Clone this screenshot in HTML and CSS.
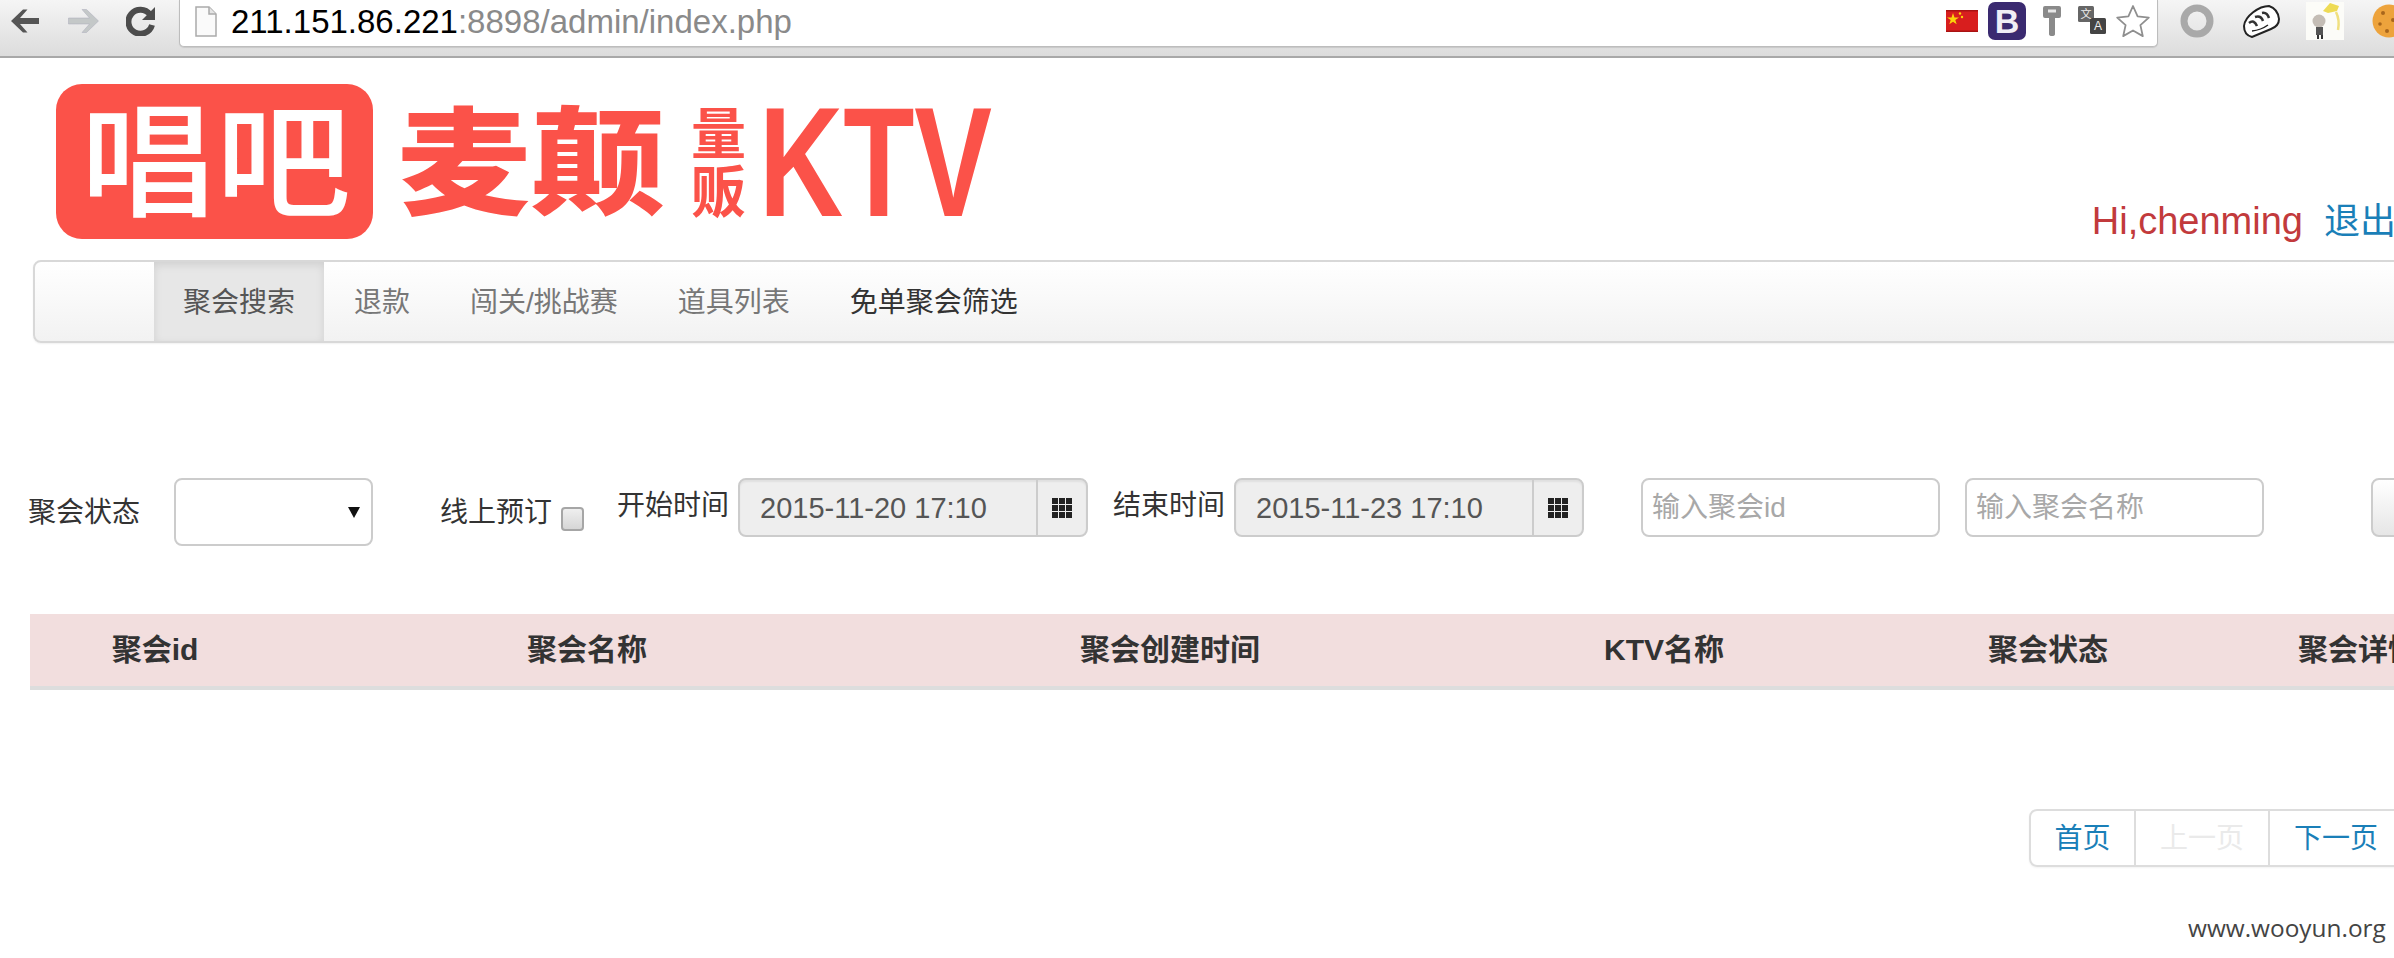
FILE: index.html
```html
<!DOCTYPE html>
<html lang="zh-CN">
<head>
<meta charset="utf-8">
<title>KTV admin</title>
<link rel="stylesheet" href="styles.css">
</head>
<body>
<div class="toolbar">
  <div class="nav-buttons">
    <svg class="ic-back" viewBox="0 0 30 26"><path d="M1 13 13 1.500h4.500L10 10h19v6H10l7.500 8.500H13z" fill="#555"/></svg>
    <svg class="ic-forward" viewBox="0 0 32 26"><path d="M31 13 19 1.500h-4.500L22 10H1v6h21l-7.500 8.500H19z" fill="#c4c8c8" stroke="#aab" stroke-width=".5"/></svg>
    <svg class="ic-reload" viewBox="0 0 30 30"><path d="M24 8.500A12 12 0 1 0 26 19" fill="none" stroke="#4c4c4c" stroke-width="6"/><path d="M29 1v13H16z" fill="#4c4c4c"/></svg>
  </div>
  <div class="omnibox">
    <svg class="ic-page" viewBox="0 0 22 31"><path d="M1 1h13l7 7v22H1z" fill="#fafafa" stroke="#aaa" stroke-width="1.500"/><path d="M14 1v7h7" fill="#e4e4e4" stroke="#aaa" stroke-width="1.500"/></svg>
    <span class="url"><span class="url-host">211.151.86.221</span>:8898/admin/index.php</span>
    <span class="omni-icons">
      <svg class="ic-flag" viewBox="0 0 32 22"><rect width="32" height="22" fill="#d81e1e"/><rect width="32" height="1.500" fill="#a91212"/><rect y="20.500" width="32" height="1.500" fill="#a91212"/><path d="m7 3 1.500 4.500H13L9.300 10l1.400 4.300L7 11.700l-3.700 2.600L4.700 10 1 7.500h4.500z" fill="#fbd40a"/><circle cx="14" cy="3.500" r="1.200" fill="#fbd40a"/><circle cx="16" cy="7" r="1.200" fill="#fbd40a"/></svg>
      <span class="ic-bootstrap">B</span>
      <svg class="ic-key" viewBox="0 0 20 30"><path d="M1 2q0-2 2-2h14q2 0 2 2v8q0 2-2 2h-4v16q0 2-3 2t-3-2V12H3q-2 0-2-2z" fill="#8a8a8a"/><rect x="6" y="3.500" width="8" height="3" fill="#e8e8e8"/></svg>
      <svg class="ic-translate" viewBox="0 0 28 28"><rect width="16" height="16" rx="1.500" fill="#666"/><rect x="12" y="12" width="16" height="16" rx="1.500" fill="#444"/><text class="tr-a" x="8" y="12">文</text><text class="tr-b" x="20" y="24">A</text></svg>
      <svg class="ic-star" viewBox="0 0 34 34"><path d="m17 2 4.600 10.400 11.200 1.200-8.400 7.500 2.400 11L17 26.500 7.200 32.100l2.400-11-8.400-7.500 11.200-1.200z" fill="#fff" stroke="#8f8f8f" stroke-width="1.800" stroke-linejoin="round"/></svg>
    </span>
  </div>
  <div class="extensions">
    <svg class="ic-ring" viewBox="0 0 34 34"><circle cx="17" cy="17" r="13" fill="none" stroke="#a9a9a9" stroke-width="7"/></svg>
    <svg class="ic-shoe" viewBox="0 0 38 34"><path d="M2 22C3 12 17 2 27 2q9 3 10 13 0 7-8 10L10 33Q2 31 2 22z" fill="#fff" stroke="#222" stroke-width="2"/><path d="M7 19q5-4 8 3M13 13q6-2 8 4M20 9q5-1 7 5" fill="none" stroke="#333" stroke-width="2.500"/><path d="M10 27q9-1 16-6" fill="none" stroke="#222" stroke-width="1.500"/></svg>
    <svg class="ic-anime" viewBox="0 0 38 38"><rect width="38" height="38" fill="#fcfcf8"/><path d="M17 9 24 1l9 3-2 5-9 2z" fill="#eedb55"/><path d="M30 10q4 8 2 18" fill="none" stroke="#f0e080" stroke-width="2.500"/><circle cx="13" cy="19" r="6.500" fill="#c4bdb5"/><rect x="10" y="25" width="7" height="8" fill="#555"/><path d="M11 33h2v4h-2zM15 33h2v4h-2z" fill="#333"/></svg>
    <svg class="ic-cookie" viewBox="0 0 34 34"><circle cx="17" cy="17" r="16.500" fill="#eda33c"/><circle cx="11" cy="9" r="2" fill="#a8661c"/><circle cx="21" cy="16" r="2" fill="#a8661c"/><circle cx="8" cy="20" r="1.800" fill="#a8661c"/><circle cx="15" cy="27" r="2" fill="#a8661c"/></svg>
  </div>
</div>

<header class="site-header">
  <svg class="logo" viewBox="0 0 937 155" role="img" aria-label="唱吧麦颠量贩KTV">
    <rect class="logo-badge" width="317" height="155" rx="26"/>
    <text class="logo-cjk logo-white" x="24" y="123" textLength="271" lengthAdjust="spacingAndGlyphs">唱吧</text>
    <text class="logo-cjk logo-big" x="341" y="121" textLength="268" lengthAdjust="spacingAndGlyphs">麦颠</text>
    <text class="logo-cjk logo-small" x="635" y="70" textLength="55" lengthAdjust="spacingAndGlyphs">量</text>
    <text class="logo-cjk logo-small" x="635" y="128" textLength="55" lengthAdjust="spacingAndGlyphs">贩</text>
    <text class="logo-latin" x="703" y="132" textLength="233" lengthAdjust="spacingAndGlyphs">KTV</text>
  </svg>
  <div class="user">
    <span class="user-name">Hi,chenming</span>
    <a class="user-exit">退出</a>
  </div>
</header>

<nav class="main-nav">
  <a class="tab tab-active">聚会搜索</a>
  <a class="tab">退款</a>
  <a class="tab">闯关/挑战赛</a>
  <a class="tab">道具列表</a>
  <a class="tab tab-dark">免单聚会筛选</a>
</nav>

<form class="filters">
  <label class="flabel flabel-state">聚会状态</label>
  <div class="select"><span class="select-arrow"></span></div>
  <label class="flabel flabel-online">线上预订</label>
  <span class="checkbox"></span>
  <label class="flabel flabel-time flabel-start">开始时间</label>
  <div class="date-group date-start">
    <span class="date-value">2015-11-20 17:10</span>
    <span class="date-btn"><span class="grid-icon"><i></i><i></i><i></i><i></i><i></i><i></i><i></i><i></i><i></i></span></span>
  </div>
  <label class="flabel flabel-time flabel-end">结束时间</label>
  <div class="date-group date-end">
    <span class="date-value">2015-11-23 17:10</span>
    <span class="date-btn"><span class="grid-icon"><i></i><i></i><i></i><i></i><i></i><i></i><i></i><i></i><i></i></span></span>
  </div>
  <div class="textbox textbox-id">输入聚会id</div>
  <div class="textbox textbox-name">输入聚会名称</div>
  <div class="search-btn"></div>
</form>

<div class="table-head">
  <div>聚会id</div>
  <div>聚会名称</div>
  <div>聚会创建时间</div>
  <div>KTV名称</div>
  <div>聚会状态</div>
  <div>聚会详情</div>
</div>

<div class="pagination">
  <a class="page page-first">首页</a>
  <a class="page page-disabled">上一页</a>
  <a class="page">下一页</a>
</div>

<div class="watermark">www.wooyun.org</div>
</body>
</html>
```
FILE: styles.css
```css
* { box-sizing: border-box; }
html, body { margin: 0; padding: 0; }
body {
  position: relative;
  width: 2394px;
  height: 958px;
  overflow: hidden;
  background: #fff;
  color: #333;
  font-family: "Liberation Sans", "Noto Sans CJK SC", sans-serif;
  font-size: 28px;
}

/* Browser chrome */
.toolbar {
  display: flex;
  height: 58px;
  background: linear-gradient(#f5f5f5, #dcdcdc);
  border-bottom: 2px solid #a8a8a8;
}
.nav-buttons { display: flex; width: 179px; padding-left: 10px; flex: none; }
.nav-buttons svg { display: block; }
.ic-back { width: 30px; height: 26px; margin-top: 8px; }
.ic-forward { width: 33px; height: 26px; margin: 8px 0 0 27px; }
.ic-reload { width: 30px; height: 30px; margin: 6px 0 0 26px; }
.omnibox {
  display: flex;
  align-items: flex-start;
  width: 1979px;
  height: 47px;
  flex: none;
  background: #fff;
  border: 1px solid #bdbdbd;
  border-top: 0;
  border-radius: 0 0 5px 5px;
  box-shadow: 0 1px 1px #c8c8c8;
  padding-left: 15px;
}
.ic-page { width: 22px; height: 31px; margin-top: 6px; flex: none; }
.url {
  margin-left: 14px;
  font-size: 33px;
  line-height: 44px;
  color: #8a8a8a;
  white-space: nowrap;
}
.url-host { color: #000; }
.omni-icons { display: flex; margin-left: auto; align-items: flex-start; padding-right: 7px; }
.ic-flag { width: 32px; height: 22px; margin-top: 10px; }
.ic-bootstrap {
  width: 38px;
  height: 38px;
  margin: 2px 0 0 10px;
  border-radius: 7px;
  background: #3a2a70;
  color: #f0eef6;
  font-weight: 700;
  font-size: 34px;
  line-height: 38px;
  text-align: center;
}
.ic-key { width: 20px; height: 30px; margin: 6px 0 0 16px; }
.ic-translate { width: 28px; height: 28px; margin: 6px 0 0 16px; }
.tr-a { font-size: 11px; fill: #eee; text-anchor: middle; }
.tr-b { font-size: 12px; fill: #eee; text-anchor: middle; }
.ic-star { width: 34px; height: 34px; margin: 4px 0 0 10px; }
.extensions { position: relative; display: flex; flex: none; padding-left: 22px; align-items: flex-start; }
.ic-ring { width: 34px; height: 34px; margin-top: 4px; flex: none; }
.ic-shoe { width: 38px; height: 34px; margin: 4px 0 0 28px; flex: none; }
.ic-anime { width: 38px; height: 38px; margin: 2px 0 0 26px; flex: none; }
.ic-cookie { width: 34px; height: 34px; margin: 4px 0 0 28px; flex: none; }

/* Site header */
.site-header {
  display: flex;
  justify-content: space-between;
  align-items: flex-start;
  height: 202px;
  padding: 26px 0 0 56px;
}
.logo { display: block; width: 937px; height: 155px; overflow: visible; }
.logo-badge { fill: #fb5249; }
.logo-cjk { font-family: "Noto Sans CJK SC", sans-serif; font-weight: 900; fill: #fb5249; }
.logo-white { fill: #fff; font-size: 124px; font-weight: 500; }
.logo-big { font-size: 116px; }
.logo-small { font-size: 56px; font-weight: 700; }
.logo-latin { font-family: "Liberation Sans", sans-serif; font-weight: 700; font-size: 155px; fill: #fb5249; }
.user {
  display: flex;
  align-items: baseline;
  margin: 114px -2px 0 0;
  line-height: 46px;
  white-space: nowrap;
}
.user-name { font-size: 38px; color: #c23a3c; }
.user-exit { font-size: 36px; color: #1a7fb8; margin-left: 21px; }

/* Navigation */
.main-nav {
  display: flex;
  height: 83px;
  margin-left: 33px;
  width: 2400px;
  padding-left: 119px;
  background: linear-gradient(#fff, #f2f2f2);
  border: 2px solid #d8d8d8;
  border-radius: 8px;
  box-shadow: 0 1px 2px rgba(0, 0, 0, .06);
}
.tab {
  padding: 0 30px;
  line-height: 81px;
  color: #777;
  white-space: nowrap;
}
.tab-active { padding: 0 29px; background: #e7e7e7; color: #555; box-shadow: inset 0 3px 8px rgba(0, 0, 0, .1); }
.tab-dark { color: #333; }

/* Filters */
.filters {
  display: flex;
  align-items: flex-start;
  height: 136px;
  margin-top: 135px;
  padding-left: 28px;
  color: #333;
}
.flabel { flex: none; line-height: 70px; white-space: nowrap; }
.flabel-online { margin-left: 67px; }
.flabel-time { line-height: 56px; }
.flabel-start { margin-left: 33px; }
.flabel-end { margin-left: 25px; }
.select {
  position: relative;
  flex: none;
  width: 199px;
  height: 68px;
  margin-left: 34px;
  background: #fff;
  border: 2px solid #ccc;
  border-radius: 8px;
}
.select-arrow {
  position: absolute;
  left: 172px;
  top: 27px;
  border-left: 6px solid transparent;
  border-right: 6px solid transparent;
  border-top: 11px solid #111;
}
.checkbox {
  flex: none;
  width: 23px;
  height: 24px;
  margin: 29px 0 0 9px;
  border: 2px solid #a6a6a6;
  border-radius: 4px;
  background: linear-gradient(#efefef, #d6d6d6);
}
.date-group {
  display: flex;
  flex: none;
  height: 59px;
  background: #eee;
  border: 2px solid #ccc;
  border-radius: 8px;
  box-shadow: inset 0 2px 2px rgba(0, 0, 0, .06);
}
.date-start { width: 350px; margin-left: 9px; }
.date-end { width: 350px; margin-left: 9px; }
.date-value { flex: 1; padding-left: 20px; line-height: 57px; font-size: 29px; color: #555; white-space: nowrap; }
.date-btn {
  display: flex;
  align-items: center;
  justify-content: center;
  width: 50px;
  flex: none;
  border-left: 2px solid #ccc;
}
.grid-icon { display: grid; grid-template-columns: repeat(3, 6px); grid-auto-rows: 6px; gap: 1px; }
.grid-icon i { display: block; background: #222; }
.textbox {
  flex: none;
  height: 59px;
  padding-left: 9px;
  background: #fff;
  border: 2px solid #ccc;
  border-radius: 8px;
  line-height: 55px;
  color: #a8a8a8;
}
.textbox-id { width: 299px; margin-left: 57px; }
.textbox-name { width: 299px; margin-left: 25px; }
.search-btn {
  flex: none;
  width: 100px;
  height: 59px;
  margin-left: 107px;
  background: linear-gradient(#fff, #e6e6e6);
  border: 2px solid #ccc;
  border-radius: 8px;
}

/* Table head */
.table-head {
  display: grid;
  grid-template-columns: 250px 614px 552px 436px 332px 288px;
  width: 2472px;
  height: 76px;
  margin-left: 30px;
  background: #f2dede;
  border-bottom: 4px solid #ddd;
  font-size: 30px;
  font-weight: 700;
  line-height: 72px;
  text-align: center;
  white-space: nowrap;
}

/* Pagination */
.pagination {
  display: flex;
  width: 400px;
  height: 58px;
  margin: 119px 0 0 2029px;
  border: 2px solid #ddd;
  border-radius: 8px;
  box-shadow: 0 1px 2px rgba(0, 0, 0, .05);
}
.page {
  flex: none;
  width: 134px;
  line-height: 56px;
  text-align: center;
  color: #1a7fb8;
  border-left: 2px solid #ddd;
}
.page-first { width: 103px; border-left: 0; }
.page-disabled { color: #eaeaea; }

.watermark {
  position: absolute;
  left: 2188px;
  top: 910px;
  font-family: "Open Sans", sans-serif;
  font-size: 24.400px;
  line-height: 36px;
  color: #444;
}
```
